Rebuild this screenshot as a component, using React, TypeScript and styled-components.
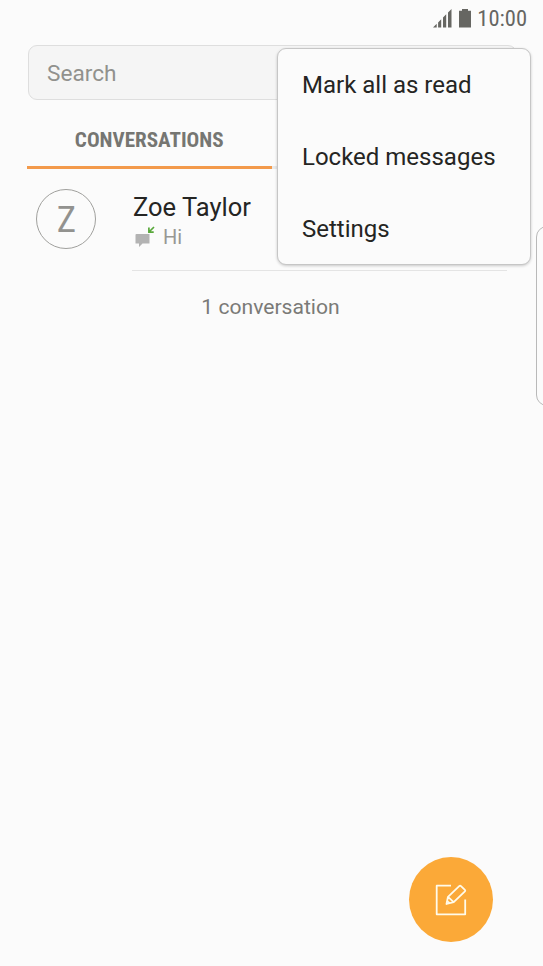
import React from "react";
import styled, { createGlobalStyle } from "styled-components";

const GlobalStyle = createGlobalStyle`
  * { box-sizing: border-box; }
  body { margin: 0; background: #fbfbfb; font-family: Roboto, "Liberation Sans", sans-serif; }
`;

const Screen = styled.main`
  position: relative;
  display: flex;
  flex-direction: column;
  width: 543px;
  height: 966px;
  overflow: hidden;
  background: #fbfbfb;
`;

const StatusBar = styled.header`
  display: flex;
  align-items: center;
  justify-content: flex-end;
  height: 36px;
  padding-right: 16px;
  color: #666662;
  svg { display: block; flex: none; }
`;

const Clock = styled.time`
  margin-left: 6px;
  font-family: "Roboto Condensed", Roboto, sans-serif;
  font-stretch: 75%;
  font-size: 22.5px;
  line-height: 36px;
`;

const SearchField = styled.div`
  display: flex;
  align-items: center;
  width: 489px;
  height: 55px;
  margin: 9px 0 0 28px;
  padding: 2px 0 0 18px;
  border: 1px solid #dedede;
  border-radius: 9px;
  background: #f5f5f5;
  color: #91918d;
  font-size: 22.6px;
`;

const Tabs = styled.nav`
  display: flex;
  height: 69px;
  margin: 0 27px;
`;

const Tab = styled.div<{ $active?: boolean }>`
  display: flex;
  flex: 1;
  justify-content: center;
  height: 69px;
  padding-top: 26px;
  border-bottom: 3px solid ${(p) => (p.$active ? "#f39a4b" : "#e9e9e9")};
  color: #767672;
  font-family: "Roboto Condensed", Roboto, sans-serif;
  font-stretch: 75%;
  font-size: 21.1px;
  font-weight: 700;
  line-height: 28px;
`;

const Conversation = styled.article`
  display: flex;
  height: 102px;
  margin: 0 36px;
`;

const Avatar = styled.div`
  display: flex;
  align-items: center;
  justify-content: center;
  width: 60px;
  height: 60px;
  margin-top: 20px;
  padding-left: 1px;
  border: 1px solid #a0a09d;
  border-radius: 50%;
  color: #92928f;
  font-family: "Roboto Condensed", Roboto, sans-serif;
  font-stretch: 75%;
  font-size: 37px;
`;

const Details = styled.div`
  flex: 1;
  margin-left: 36px;
  padding: 23px 0 0 1px;
  border-bottom: 1px solid #e4e4e4;
`;

const Name = styled.div`
  color: #252523;
  font-size: 25.5px;
  line-height: 30px;
`;

const Preview = styled.div`
  display: flex;
  align-items: center;
  gap: 8px;
  height: 30px;
  margin-left: 2px;
  color: #989894;
  font-size: 20px;
  svg { display: block; }
`;

const Count = styled.div`
  margin-top: 21px;
  padding-right: 2px;
  text-align: center;
  color: #7a7a77;
  font-size: 21.1px;
  line-height: 30px;
`;

const Menu = styled.div`
  position: absolute;
  top: 48px;
  left: 277px;
  width: 254px;
  height: 217px;
  border: 1px solid #c6c6c6;
  border-radius: 9px;
  background: #fbfbfb;
  box-shadow: 0 1px 3px rgba(0, 0, 0, 0.2);
`;

const MenuItem = styled.div`
  display: flex;
  align-items: center;
  height: 72px;
  padding-left: 24px;
  color: #252523;
  font-size: 24px;
`;

const EdgeHandle = styled.div`
  position: absolute;
  top: 226px;
  left: 536px;
  width: 24px;
  height: 180px;
  border: 1px solid #b9b9b9;
  border-radius: 11px;
`;

const ComposeButton = styled.button`
  position: absolute;
  top: 857px;
  left: 409px;
  display: grid;
  place-items: center;
  width: 84px;
  height: 85px;
  padding: 0;
  border: 0;
  border-radius: 50%;
  background: #fba938;
`;

const IconRow = styled.div`
  display: flex;
  gap: 7px;
`;

const SignalIcon = () => (
  <svg width="19" height="19" viewBox="0 0 19 19" fill="currentColor">
    <path d="M0 18.5L3.7 14.8V18.5ZM5.1 13.4L8.2 10.3V18.5H5.1ZM10 8.5L13.2 5.3V18.5H10ZM15 3.5L18.5 0V18.5H15Z" />
  </svg>
);

const BatteryIcon = () => (
  <svg width="12" height="19" viewBox="0 0 12 19" fill="currentColor">
    <path d="M3 0H9V1.8H12V18.5H0V1.8H3Z" />
  </svg>
);

const ReceivedIcon = () => (
  <svg width="20" height="22" viewBox="0 0 20 22">
    <path d="M1.5 8H14.5V17.5H7.5L4 21V17.5H0.5V8.8Q0.5 8 1.5 8Z" fill="#b3b3b3" />
    <path d="M19 1L14.5 5.5M13.9 1.4V6.1H18.7" fill="none" stroke="#58a83a" strokeWidth="1.7" />
  </svg>
);

const ComposeIcon = () => (
  <svg width="32" height="32" viewBox="0 0 32 32" fill="none" stroke="#fffbea" strokeWidth="1.8" strokeLinejoin="round">
    <path d="M16 1.7H1.7V30.3H30.2V15.5" />
    <path d="M13 12.8L24.2 2.1Q25.1 1.3 26 2.1L29.9 5.8Q30.6 6.6 29.9 7.4L18.7 18.1L11.5 20ZM13 12.8L18.7 18.1" />
    <path d="M12 17L14.7 19.2" />
  </svg>
);

export default function App() {
  return (
    <>
      <GlobalStyle />
      <Screen>
        <StatusBar>
          <IconRow>
            <SignalIcon />
            <BatteryIcon />
          </IconRow>
          <Clock>10:00</Clock>
        </StatusBar>
        <SearchField>Search</SearchField>
        <Tabs>
          <Tab $active>CONVERSATIONS</Tab>
          <Tab />
        </Tabs>
        <Conversation>
          <Avatar>Z</Avatar>
          <Details>
            <Name>Zoe Taylor</Name>
            <Preview>
              <ReceivedIcon />
              <span>Hi</span>
            </Preview>
          </Details>
        </Conversation>
        <Count>1 conversation</Count>
        <EdgeHandle />
        <Menu>
          <MenuItem>Mark all as read</MenuItem>
          <MenuItem>Locked messages</MenuItem>
          <MenuItem>Settings</MenuItem>
        </Menu>
        <ComposeButton aria-label="Compose message">
          <ComposeIcon />
        </ComposeButton>
      </Screen>
    </>
  );
}
